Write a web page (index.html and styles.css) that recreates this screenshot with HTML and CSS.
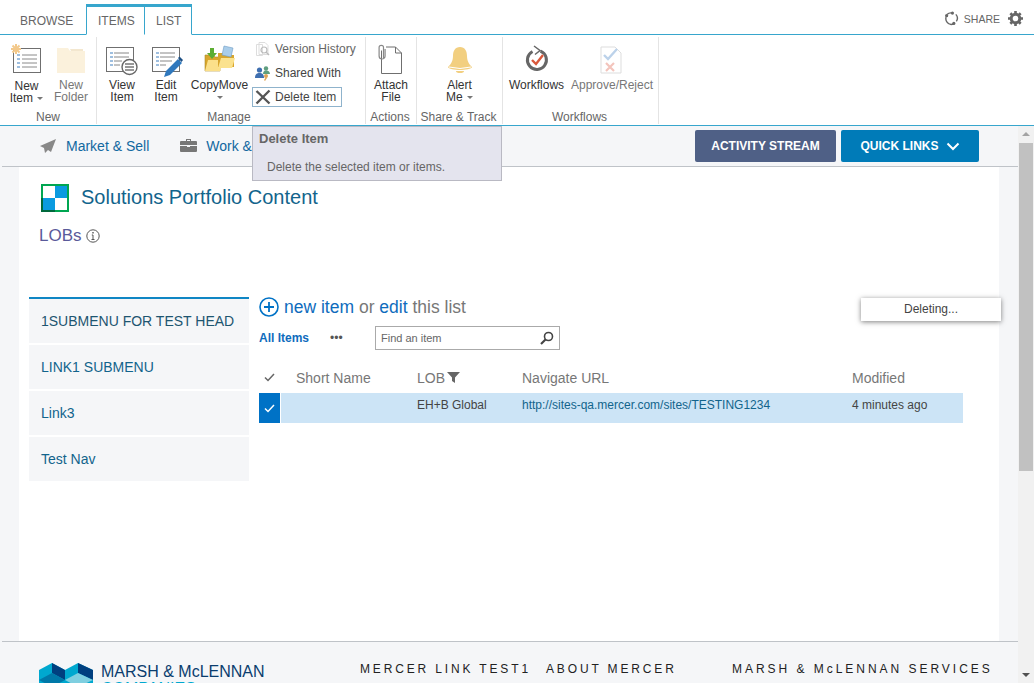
FILE: index.html
```html
<!DOCTYPE html>
<html lang="en">
<head>
<meta charset="utf-8">
<title>LOBs</title>
<link rel="stylesheet" href="styles.css">
</head>
<body>
<div class="ribbon">
  <div class="tabbar">
    <div class="tabs">
      <span class="tab">BROWSE</span>
      <span class="tab active">ITEMS</span>
      <span class="tab active second">LIST</span>
    </div>
    <div class="share">
      <svg width="15" height="15" viewBox="0 0 16 16"><path d="M3.200 3.800A6 6 0 0 1 8 2M12.600 3.600A6 6 0 0 1 13.200 11M10.500 13.600A6 6 0 0 1 3 11.500A6 6 0 0 1 2.200 6.500" fill="none" stroke="#666" stroke-width="1.500"/><circle cx="9" cy="2.200" r="1.700" fill="#666"/><circle cx="2.800" cy="5" r="1.700" fill="#666"/><circle cx="10.500" cy="13.200" r="1.700" fill="#666"/></svg>
      <span class="share-label">SHARE</span>
      <svg width="15" height="15" viewBox="0 0 16 16"><circle cx="8" cy="8" r="4.600" fill="none" stroke="#666" stroke-width="3.200"/><path d="M6.600 0h2.800v3H6.600zM6.600 13h2.800v3H6.600zM0 6.600h3v2.800H0zM13 6.600h3v2.800h-3zM1.500 3.400l2-2 2 2-2 2zM10.500 3.400l2-2 2 2-2 2zM1.500 12.600l2-2 2 2-2 2zM10.500 12.600l2-2 2 2-2 2z" fill="#666"/></svg>
    </div>
  </div>
  <div class="groups">
    <div class="group g-new">
      <div class="cmds">
        <div class="cmd w-new">
          <svg class="ico" width="32" height="32" viewBox="0 0 32 32"><rect x="2.500" y="4.500" width="27" height="24" fill="#fff" stroke="#6f6f6f"/><path d="M11 11h15M11 15h15M11 19h15M11 23h15" stroke="#8a8a8a"/><path d="M6 11h3M6 15h3M6 19h3M6 23h3" stroke="#3f7fbf"/><path d="M5 0v10M0 5h10M1.500 1.500l7 7M8.500 1.500l-7 7" stroke="#f3c98b" stroke-width="2"/></svg>
          <span>New<br>Item <i class="caret"></i></span>
        </div>
        <div class="cmd w-folder dim">
          <svg class="ico" width="28" height="25" viewBox="0 0 28 25"><path d="M0 0h11l2 3h15v22H0z" fill="#fbf1dc"/><path d="M13 1h13v2H14z" fill="#f3e7cf"/></svg>
          <span>New<br>Folder</span>
        </div>
      </div>
      <div class="glabel">New</div>
    </div>
    <div class="group g-manage">
      <div class="cmds">
        <div class="cmd w-view">
          <svg class="ico" width="34" height="32" viewBox="0 0 34 32"><rect x="1.500" y="1.500" width="27" height="24" fill="#fff" stroke="#6f6f6f"/><path d="M9 7h15M9 11h15M9 15h8M9 19h6" stroke="#888"/><path d="M5 7h3M5 11h3M5 15h3M5 19h3" stroke="#3f7fbf"/><circle cx="24.500" cy="21" r="7.500" fill="#fff" stroke="#666" stroke-width="1.400"/><path d="M20 18h9M20 21h9M20 24h9" stroke="#777" stroke-width="1.400"/></svg>
          <span>View<br>Item</span>
        </div>
        <div class="cmd w-edit">
          <svg class="ico" width="34" height="32" viewBox="0 0 34 32"><rect x="3.500" y="1.500" width="27" height="24" fill="#fff" stroke="#6f6f6f"/><path d="M11 7h15M11 11h15M11 15h12M11 19h6" stroke="#888"/><path d="M7 7h3M7 11h3M7 15h3M7 19h3" stroke="#3f7fbf"/><path d="M15 31l2-6 12-12 4 4-12 12z" fill="#2f78bd"/><path d="M29 12l1.500-1.500 3.500 3.500-1.500 2z" fill="#1c4f84"/></svg>
          <span>Edit<br>Item</span>
        </div>
        <div class="cmd w-copy">
          <svg class="ico" width="32" height="30" viewBox="0 0 32 30"><path d="M1 11h8l2 2h5v14H1z" fill="#d8a62c" stroke="#a98a2c" stroke-width=".6"/><path d="M1 27l3-11h15l-3 11z" fill="#fbe08a"/><path d="M6 4h4v5h3l-5 6-5-6h3z" fill="#5cae32"/><path d="M14 9h8l2 2h6v12H14z" fill="#d8a62c"/><path d="M14 24l3-10h14l-3 10z" fill="#fbe28e"/><path d="M20 2l9 2-2 9-9-2z" fill="#a9cdea" stroke="#6f9cc4" stroke-width=".6"/></svg>
          <span>CopyMove<br><i class="caret"></i></span>
        </div>
        <div class="stack">
          <div class="row dim2">
            <svg width="16" height="16" viewBox="0 0 16 16"><path d="M1.500 3.500h6v11h-6zM4 1.500h6l3 3v9H4z" fill="#fff" stroke="#ddd"/><circle cx="9" cy="9" r="3" fill="none" stroke="#bbb" stroke-width="1.200"/><path d="M11 11l3 3" stroke="#bbb" stroke-width="1.400"/></svg>
            <span>Version History</span>
          </div>
          <div class="row">
            <svg width="16" height="16" viewBox="0 0 16 16"><circle cx="4.500" cy="5" r="2.600" fill="#3f6fb0"/><path d="M0 13c0-4 2-5 4.500-5S9 9 9 13z" fill="#3f6fb0"/><circle cx="11" cy="3.500" r="2.200" fill="#5f9e7f"/><path d="M8 9c0-2 1-3.500 3-3.500s4 1 4 3.500z" fill="#5f9e7f"/><circle cx="11" cy="11" r="2" fill="#e0a555"/><path d="M9 15l2-3 1 1-2 3z" fill="#e0a555"/></svg>
            <span>Shared With</span>
          </div>
          <div class="row boxed">
            <svg width="16" height="16" viewBox="0 0 16 16"><path d="M1.500 2l13 12.500M14.500 1.500L1.500 14.500" stroke="#555" stroke-width="2.400"/></svg>
            <span>Delete Item</span>
          </div>
        </div>
      </div>
      <div class="glabel">Manage</div>
    </div>
    <div class="group g-actions">
      <div class="cmds">
        <div class="cmd w-attach">
          <svg class="ico" width="26" height="32" viewBox="0 0 26 32"><path d="M3.500 6.500v23h20V9l-6-6H8" fill="#fff" stroke="#6f6f6f"/><path d="M17.500 3v6h6" fill="none" stroke="#6f6f6f"/><path d="M5.500 14V3.500a2.200 2.200 0 0 0-4.400 0V12a3 3 0 0 0 6 0V5" fill="none" stroke="#888" stroke-width="1.200"/></svg>
          <span>Attach<br>File</span>
        </div>
      </div>
      <div class="glabel">Actions</div>
    </div>
    <div class="group g-share">
      <div class="cmds">
        <div class="cmd w-alert">
          <svg class="ico" width="26" height="32" viewBox="0 0 26 32"><path d="M13 2c5 0 7 4 7 9 0 6 3 9 5 11 0 2-7 3-12 3S1 24 1 22c2-2 5-5 5-11 0-5 2-9 7-9z" fill="#f2cf80"/><path d="M2 22q11 3 22 0" stroke="#fff" fill="none"/><path d="M9 26h8a4 2 0 0 1-8 0z" fill="#f2cf80"/></svg>
          <span>Alert<br>Me <i class="caret"></i></span>
        </div>
      </div>
      <div class="glabel">Share &amp; Track</div>
    </div>
    <div class="group g-flows">
      <div class="cmds">
        <div class="cmd w-flow">
          <svg class="ico" width="26" height="32" viewBox="0 0 26 32"><path d="M8.500 6.500a9.500 9.500 0 1 0 8-.4" fill="none" stroke="#666" stroke-width="3"/><path d="M10 1l6 4.500-5 4" fill="none" stroke="#666" stroke-width="1.500"/><path d="M8 15l4 4 7-9" fill="none" stroke="#d9583b" stroke-width="2.400"/></svg>
          <span>Workflows</span>
        </div>
        <div class="cmd w-approve dim">
          <svg class="ico" width="22" height="28" viewBox="0 0 22 28"><path d="M1 1h14l6 6v20H1z" fill="#fff" stroke="#ddd"/><path d="M4 9l4 4 9-10" fill="none" stroke="#bcd2ea" stroke-width="2.400"/><path d="M6 17l8 8M14 17l-8 8" stroke="#f3c4bc" stroke-width="2.200"/></svg>
          <span>Approve/Reject</span>
        </div>
      </div>
      <div class="glabel">Workflows</div>
    </div>
  </div>
</div>

<div class="viewport">
  <div class="page">
    <nav class="topnav">
      <div class="navlinks">
        <span class="navlink">
          <svg width="18" height="16" viewBox="0 0 18 16"><path d="M17 1L1 8l4 2 1 5 3-3 3 2z" fill="#888"/></svg>
          Market &amp; Sell
        </span>
        <span class="navlink second-link">
          <svg width="17" height="14" viewBox="0 0 17 14"><path d="M6 3V1h5v2h5q1 0 1 1v3H0V4q0-1 1-1zM7 2v1h3V2zM0 8h7v1h3V8h7v5q0 1-1 1H1q-1 0-1-1z" fill="#777"/></svg>
          Work &amp;
        </span>
      </div>
      <div class="navbtns">
        <span class="btn slate">ACTIVITY STREAM</span>
        <span class="btn blue">QUICK LINKS
          <svg width="14" height="9" viewBox="0 0 14 9"><path d="M1.500 1.500L7 7l5.500-5.500" fill="none" stroke="#fff" stroke-width="2"/></svg>
        </span>
      </div>
    </nav>
    <main class="content">
      <header class="sitehead">
        <svg width="28" height="28" viewBox="0 0 28 28"><rect width="28" height="28" fill="#00a651"/><rect x="2" y="2" width="24" height="24" fill="#fff"/><rect x="14" y="2" width="12" height="12" fill="#0a9be0"/><rect x="2" y="14" width="12" height="12" fill="#0a9be0"/><path d="M0 14h2v12h12v2H0z" fill="#00693c"/></svg>
        <h1>Solutions Portfolio Content</h1>
      </header>
      <div class="pagetitle">
        <span>LOBs</span>
        <svg width="14" height="14" viewBox="0 0 14 14"><circle cx="7" cy="7" r="6.200" fill="none" stroke="#555"/><path d="M7 6v4.500M5.500 10.500h3M5.800 6h1.200" stroke="#555"/><rect x="6.300" y="3" width="1.400" height="1.500" fill="#555"/></svg>
      </div>
      <div class="columns">
        <aside class="sidenav">
          <a class="sideitem first">1SUBMENU FOR TEST HEAD</a>
          <a class="sideitem">LINK1 SUBMENU</a>
          <a class="sideitem">Link3</a>
          <a class="sideitem">Test Nav</a>
        </aside>
        <section class="listpart">
          <div class="hero">
            <svg width="20" height="20" viewBox="0 0 20 20"><circle cx="10" cy="10" r="9" fill="none" stroke="#0072c6" stroke-width="1.600"/><path d="M10 5v10M5 10h10" stroke="#0072c6" stroke-width="1.800"/></svg>
            <span><a>new item</a> or <a>edit</a> this list</span>
          </div>
          <div class="viewbar">
            <b>All Items</b>
            <span class="dots">•••</span>
            <div class="search">
              <span>Find an item</span>
              <svg width="14" height="14" viewBox="0 0 14 14"><circle cx="8.500" cy="5.500" r="4" fill="none" stroke="#444" stroke-width="1.600"/><path d="M5.500 8.500L1 13" stroke="#444" stroke-width="2.200"/></svg>
            </div>
          </div>
          <div class="table">
            <div class="thead">
              <span class="c-check"><svg width="11" height="9" viewBox="0 0 11 9"><path d="M1 4.500L4 7.500 10 1" fill="none" stroke="#666" stroke-width="1.500"/></svg></span>
              <span class="c-name">Short Name</span>
              <span class="c-lob">LOB<svg width="13" height="11" viewBox="0 0 13 11"><path d="M0 0h13L8 5.500V11L5 9V5.500z" fill="#666"/></svg></span>
              <span class="c-url">Navigate URL</span>
              <span class="c-mod">Modified</span>
            </div>
            <div class="trow">
              <span class="c-check sel"><svg width="11" height="9" viewBox="0 0 11 9"><path d="M1 4.500L4 7.500 10 1" fill="none" stroke="#fff" stroke-width="1.500"/></svg></span>
              <div class="cells">
                <span class="c-name"></span>
                <span class="c-lob">EH+B Global</span>
                <span class="c-url link">http://sites-qa.mercer.com/sites/TESTING1234</span>
                <span class="c-mod">4 minutes ago</span>
              </div>
            </div>
          </div>
        </section>
      </div>
    </main>
    <footer class="footer">
      <div class="brand">
        <svg width="54" height="32" viewBox="0 0 54 32"><path d="M0 8l13-7 13 7 13-7 15 7v24H0z" fill="#00a8cf"/><path d="M13 1l13 7v10l-13-7zM39 1l15 7v10l-15-7z" fill="#003f7f"/><path d="M13 11l13 7-13 7-13-7z" fill="#0078a8"/><path d="M39 11l15 7-15 7-13-7z" fill="#7fcfe0"/></svg>
        <div class="brandtext"><span class="b1">MARSH &amp; McLENNAN</span><span class="b2">COMPANIES</span></div>
      </div>
      <div class="flink f1">MERCER LINK TEST1</div>
      <div class="flink f2">ABOUT MERCER</div>
      <div class="flink f3">MARSH &amp; McLENNAN SERVICES</div>
    </footer>
  </div>
  <div class="scrollbar">
    <span class="arrow up"></span>
    <div class="thumb"></div>
    <span class="arrow down"></span>
  </div>
</div>

<div class="tooltip">
  <div class="tt-title">Delete Item</div>
  <div class="tt-body">Delete the selected item or items.</div>
</div>
<div class="status">Deleting...</div>
</body>
</html>
```
FILE: styles.css
```css
* { box-sizing: border-box; }
html, body { margin: 0; height: 684px; overflow: hidden; }
body { font-family: "Liberation Sans", Arial, sans-serif; background: #fff; color: #444; position: relative; width: 1034px; }
svg { display: block; flex: none; }

.ribbon { height: 126px; background: #fff; }
.tabbar { height: 35px; border-bottom: 1px solid #37a6cd; display: flex; justify-content: space-between; padding-left: 9px; }
.tabs { display: flex; align-items: stretch; height: 35px; padding-top: 4px; }
.tab { font-size: 12px; color: #666; padding: 11px 11px 0; height: 31px; line-height: 13px; }
.tab.active { border: 1px solid #37a6cd; border-top: 3px solid #37a6cd; border-bottom: 1px solid #fff; padding: 8px 11px 0; color: #666; background: #fff; width: 59px; }
.tab.active.second { border-left: 0; width: 47px; }
.tab:first-child { width: 77px; }
.share { display: flex; align-items: center; padding: 3px 11px 0 0; height: 34px; }
.share-label { font-size: 10.500px; color: #666; margin: 0 8px 0 5px; }

.groups { display: flex; height: 91px; padding-top: 2px; }
.group { display: flex; flex-direction: column; height: 87px; border-right: 1px solid #e4e4e4; }
.cmds { display: flex; height: 72px; }
.glabel { text-align: center; font-size: 12px; color: #666; line-height: 14px; height: 14px; margin-top: 1px; }
.g-new { width: 97px; }
.g-manage { width: 269px; }
.g-manage .glabel { padding-right: 4px; }
.g-actions { width: 51px; }
.g-actions .glabel { padding-right: 2px; }
.g-share { width: 86px; }
.g-share .glabel { padding-right: 2px; }
.g-flows { width: 156px; }
.g-flows .glabel { padding-right: 2px; }
.cmd { display: flex; flex-direction: column; align-items: center; font-size: 12px; line-height: 12px; color: #333; text-align: center; white-space: nowrap; }
.cmd.dim { color: #777; }
.w-new { width: 50px; padding: 7px 0 0 3px; }
.w-new .ico { margin-bottom: 4px; }
.w-folder { width: 42px; padding-top: 11px; }
.w-folder .ico { margin-bottom: 6px; }
.w-view { width: 46px; padding: 9px 0 0 4px; }
.w-view .ico { margin-bottom: 1px; }
.w-edit { width: 44px; padding: 9px 0 0 2px; }
.w-edit .ico { margin-bottom: 1px; }
.w-copy { width: 62px; padding: 7px 0 0 3px; }
.w-copy .ico { margin-bottom: 5px; }
.stack { display: flex; flex-direction: column; margin-left: 3px; width: 110px; }
.row { display: flex; align-items: center; gap: 4px; height: 24px; font-size: 12px; color: #444; padding-left: 3px; white-space: nowrap; }
.row.dim2 { color: #666; }
.row.boxed { border: 1px solid #8fb3cc; width: 90px; height: 20px; margin-top: 2px; padding-left: 2px; }
.w-attach { width: 50px; padding-top: 7px; }
.w-attach .ico { margin-bottom: 3px; }
.w-alert { width: 85px; padding-top: 8px; }
.w-alert .ico { margin-bottom: 2px; }
.w-flow { width: 66px; padding: 8px 0 0 1px; }
.w-flow .ico { margin-bottom: 2px; }
.w-approve { width: 86px; padding-top: 9px; }
.w-approve .ico { margin: 0 3px 5px 0; }
.caret { display: inline-block; width: 0; height: 0; border: 3px solid transparent; border-top: 3px solid #777; border-bottom: 0; vertical-align: middle; margin-left: 1px; }

.viewport { display: flex; height: 558px; border-top: 1px solid #37a6cd; margin-top: -1px; }
.page { width: 1018px; background: #f5f6f8; display: flex; flex-direction: column; }
.topnav { height: 41px; flex: none; border-bottom: 1px solid #bfc3c8; margin-left: 2px; display: flex; justify-content: space-between; padding: 4px 39px 0 37px; }
.navlinks { display: flex; gap: 31px; padding-top: 8px; }
.navlink { display: flex; gap: 9px; font-size: 14px; color: #1268a0; height: 16px; line-height: 16px; }
.navbtns { display: flex; gap: 5px; height: 32px; }
.btn { height: 32px; display: flex; align-items: center; justify-content: center; font-size: 12px; font-weight: bold; color: #fff; border-radius: 2px; }
.slate { width: 141px; background: #4f6086; }
.blue { width: 138px; background: #007bb8; gap: 7px; }

.content { flex: 1; margin: 0 19px 0 19px; background: #fff; padding: 0 0 0 10px; }
.sitehead { display: flex; align-items: center; gap: 12px; margin: 16px 0 0 12px; height: 30px; }
.sitehead h1 { margin: -2px 0 0; font-size: 20px; font-weight: normal; color: #12648c; }
.pagetitle { display: flex; gap: 4px; align-items: flex-start; margin: 14px 0 0 10px; height: 70px; font-size: 17px; color: #5a5a9a; line-height: 18px; }
.pagetitle svg { margin-top: 2px; }
.columns { display: flex; }
.sidenav { width: 220px; display: flex; flex-direction: column; gap: 2px; flex: none; }
.sideitem { height: 44px; background: #f5f6f8; font-size: 14px; color: #12648c; padding: 14px 0 0 12px; line-height: 16px; }
.sideitem.first { height: 46px; border-top: 2px solid #0f86c4; color: #1d5570; }
.listpart { margin-left: 10px; flex: 1; }
.hero { display: flex; align-items: center; gap: 5px; font-size: 17.500px; color: #777; height: 20px; white-space: nowrap; }
.hero a { color: #0f6cbd; }
.viewbar { display: flex; align-items: center; height: 24px; margin-top: 9px; font-size: 12px; }
.viewbar b { color: #0f6cbd; width: 71px; }
.dots { width: 45px; font-size: 12px; color: #555; }
.search { width: 185px; height: 24px; border: 1px solid #aaa; display: flex; justify-content: space-between; align-items: center; padding: 0 5px; color: #666; font-size: 11px; }
.table { margin-top: 14px; width: 704px; }
.thead { display: flex; height: 29px; align-items: center; font-size: 14px; color: #777; padding-bottom: 2px; }
.c-check { width: 21px; display: flex; justify-content: center; flex: none; height: 100%; align-items: center; }
.c-name { flex: none; }
.thead .c-name { width: 137px; padding-left: 16px; }
.c-lob { width: 105px; flex: none; display: flex; align-items: center; gap: 2px; }
.c-url { width: 330px; flex: none; }
.c-mod { flex: 1; }
.trow { display: flex; height: 30px; font-size: 12px; color: #444; }
.sel { background: #0072c6; }
.cells { display: flex; flex: 1; margin-left: 1px; background: #cce4f6; align-items: center; padding-bottom: 6px; }
.cells .c-name { width: 136px; }
.link { color: #12648c; }

.footer { height: 42px; flex: none; border-top: 1px solid #bfc3c8; margin-left: 2px; display: flex; padding: 20px 0 0 37px; overflow: hidden; }
.brand { display: flex; gap: 8px; width: 321px; }
.brandtext { display: flex; flex-direction: column; padding-top: 1px; }
.b1 { font-size: 16px; color: #0a3d6e; line-height: 17px; white-space: nowrap; }
.b2 { font-size: 16px; color: #00a8cf; line-height: 17px; }
.flink { font-size: 12px; letter-spacing: 2.850px; color: #222; white-space: nowrap; line-height: 14px; }
.f1 { width: 186px; }
.f2 { width: 186px; }
.f3 { letter-spacing: 2.970px; }

.scrollbar { width: 16px; background: #f1f1f1; position: relative; display: flex; flex-direction: column; align-items: center; justify-content: space-between; }
.arrow { display: block; width: 0; height: 0; border: 4px solid transparent; margin: 6px 0; }
.up { border-bottom: 4px solid #a3a3a3; border-top: 0; }
.down { border-top: 4px solid #505050; border-bottom: 0; }
.thumb { position: absolute; left: 1px; top: 17px; width: 14px; height: 328px; background: #c1c1c1; }

.tooltip { position: absolute; left: 252px; top: 126px; width: 250px; height: 55px; background: #e4e4ee; border: 1px solid #b9b9c3; font-size: 12px; color: #666; }
.tt-title { font-size: 13px; font-weight: bold; padding: 5px 0 0 6px; line-height: 14px; }
.tt-body { padding: 14px 0 0 14px; line-height: 14px; }
.status { position: absolute; left: 861px; top: 298px; width: 140px; height: 23px; background: #fff; box-shadow: 0 1px 5px rgba(0,0,0,.5); font-size: 12px; color: #444; text-align: center; line-height: 23px; }
```
